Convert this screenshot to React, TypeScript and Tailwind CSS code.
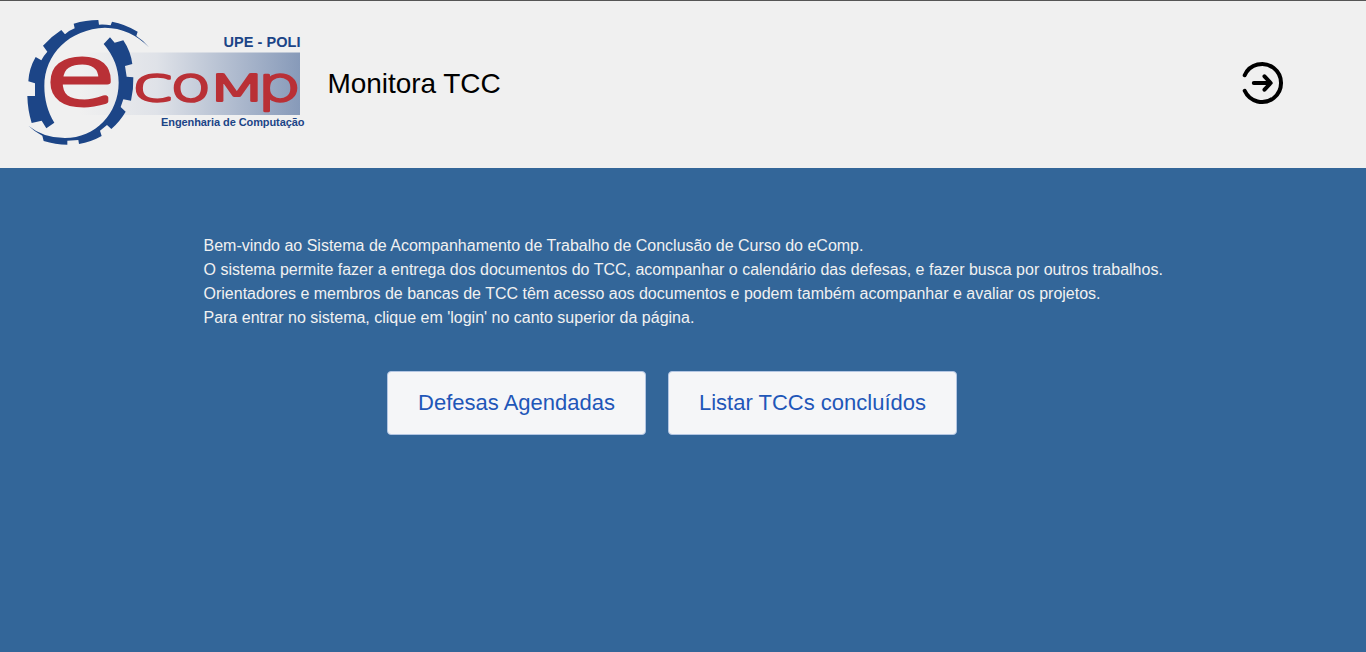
const red = '#b93036';

function Logo() {
  return (
    <svg width="290" height="145" viewBox="20 10 290 145" className="shrink-0" role="img" aria-label="eComp">
      <defs>
        <linearGradient id="band" x1="0" x2="1" y1="0" y2="0">
          <stop offset="0" stopColor="#f0f0f0" />
          <stop offset="0.35" stopColor="#dfe2e8" />
          <stop offset="1" stopColor="#879ab9" />
        </linearGradient>
      </defs>
      <rect x="80" y="52.5" width="220" height="62.5" fill="url(#band)" />
      <g transform="translate(15 10) scale(.33333)" fill="#1c4587">
        <path d="M402 112Q385 91 364 78L368 65Q330 42 291 35L287 46Q270 43 252 44L250 30Q212 30 176 41L179 55Q163 61 150 73L139 60Q108 80 84 107L97 125Q85 138 79 151L62 141Q42 175 40 214L60 220L60 258L37 258Q38 300 50 339L80 332L94 355L118 338C98 305 88 268 88 228C88 132 163 57 270 53Q345 54 402 112Z" />
        <path d="M266 102L285 82L299 98L325 91Q347 124 352 162L330 168L335 200L355 202Q356 238 348 272L325 268L317 291L332 305Q315 334 289 357L276 345L255 362L260 378Q228 396 192 402L190 390L157 392L157 404Q121 404 86 393L82 377Q59 365 40 347Q85 384 150 384C241 384 311 310 311 218Q311 155 266 102Z" />
      </g>
      <g
        fill={red}
        stroke={red}
        strokeLinejoin="round"
        className="[font-family:'DejaVu_Sans',sans-serif] font-extralight"
      >
        <text transform="translate(44.8 104.3) scale(1.43 1)" fontSize="81" strokeWidth="6" vectorEffect="non-scaling-stroke">e</text>
        <text transform="translate(132.5 101) scale(1.54 1)" fontSize="48.5" strokeWidth="3.2" vectorEffect="non-scaling-stroke">c</text>
        <text transform="translate(170.3 101) scale(1.38 1)" fontSize="48.5" strokeWidth="3.2" vectorEffect="non-scaling-stroke">o</text>
        <text transform="translate(206.7 101) scale(1.86 1)" fontSize="37.5" strokeWidth="3.2" vectorEffect="non-scaling-stroke">M</text>
        <text transform="translate(257.3 101) scale(1.42 1)" fontSize="48.5" strokeWidth="3.2" vectorEffect="non-scaling-stroke">p</text>
      </g>
      <g fill="#1c4587" className="[font-family:'Liberation_Sans',Arial,sans-serif] font-bold">
        <text x="223.5" y="47" fontSize="14.5" textLength="77">UPE - POLI</text>
        <text x="161" y="126" fontSize="11" textLength="143.5">Engenharia de Computação</text>
      </g>
    </svg>
  );
}

function LoginIcon() {
  return (
    <svg width="44" height="44" viewBox="0 0 44 44" fill="none" stroke="#000" strokeWidth="4" strokeLinecap="round" strokeLinejoin="round">
      <path d="M3.7 14.2A19 19 0 1 1 3.7 29.8" />
      <path d="M12.8 22H29.5M23.5 15.3L29.7 22L23.5 28.7" />
    </svg>
  );
}

function ActionButton({ label, width }: { label: string; width: string }) {
  return (
    <button
      type="button"
      className={`${width} h-16 rounded-[4px] border border-[#b3c6e3] bg-[#f5f6f8] pb-[2px] text-[22px] text-[#1f57b8] whitespace-nowrap`}
    >
      {label}
    </button>
  );
}

export default function App() {
  return (
    <div className="flex h-[652px] flex-col bg-[#336699] [font-family:'Liberation_Sans',Arial,sans-serif]">
      <header className="flex h-[168px] shrink-0 items-center justify-between border-t border-[#555555] bg-[#f0f0f0] pr-[81px] pb-[4px] pl-5">
        <div className="flex items-center gap-[17.5px]">
          <Logo />
          <h1 className="pt-[2px] text-[28px] leading-8 tracking-[-0.05px] text-black">Monitora TCC</h1>
        </div>
        <button type="button" aria-label="Login">
          <LoginIcon />
        </button>
      </header>
      <main className="flex flex-col pt-[66px]">
        <p className="pl-[203.5px] text-base whitespace-nowrap text-[#f1f1f1]">
          Bem-vindo ao Sistema de Acompanhamento de Trabalho de Conclusão de Curso do eComp.
          <br />
          O sistema permite fazer a entrega dos documentos do TCC, acompanhar o calendário das defesas, e fazer busca por outros trabalhos.
          <br />
          Orientadores e membros de bancas de TCC têm acesso aos documentos e podem também acompanhar e avaliar os projetos.
          <br />
          Para entrar no sistema, clique em 'login' no canto superior da página.
        </p>
        <div className="mt-[41px] flex gap-[22px] pl-[387px]">
          <ActionButton label="Defesas Agendadas" width="w-[259px]" />
          <ActionButton label="Listar TCCs concluídos" width="w-[289px]" />
        </div>
      </main>
    </div>
  );
}
